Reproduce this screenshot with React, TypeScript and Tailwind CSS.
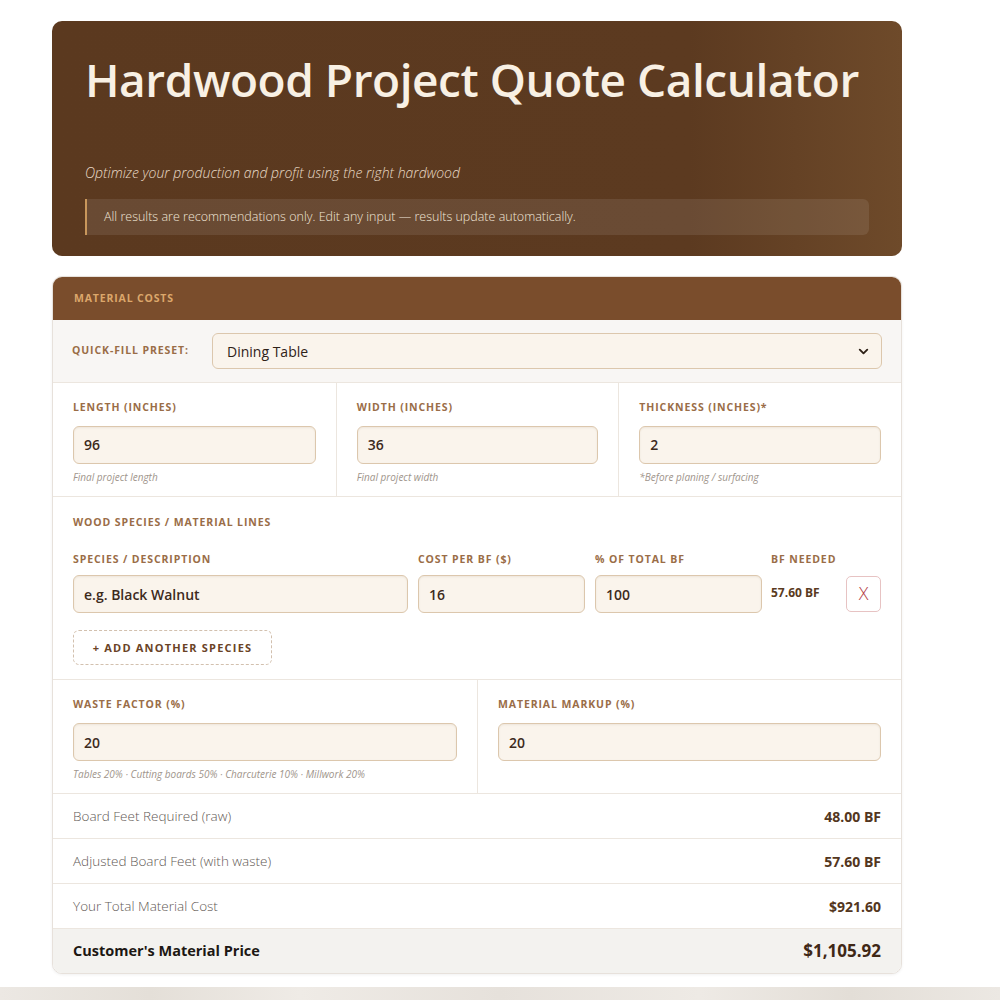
import { ChevronDown } from "lucide-react";

const label =
  "block whitespace-nowrap text-[10.5px] font-bold uppercase tracking-[0.085em] text-[#9a6d47]";
const input =
  "h-[38px] w-full rounded-[6px] border border-[#dcc7ad] bg-[#faf4ec] px-[10px] text-[14px] font-semibold text-[#3d2a1c] shadow-[inset_0_1px_2px_rgba(90,60,30,0.08)] flex items-center";
const hint = "mt-[6px] text-[10px] italic text-[#a0958c]";

function Field({ name, value, note }: { name: string; value: string; note?: string }) {
  return (
    <div className="flex flex-col px-[20px] pt-[17px] pb-[11px]">
      <span className={label}>{name}</span>
      <div className={`${input} mt-[10px]`}>{value}</div>
      {note ? <span className={hint}>{note}</span> : <span className="h-[21px]" />}
    </div>
  );
}

const results = [
  { name: "Board Feet Required (raw)", value: "48.00 BF" },
  { name: "Adjusted Board Feet (with waste)", value: "57.60 BF" },
  { name: "Your Total Material Cost", value: "$921.60" },
];

export default function App() {
  return (
    <div className="min-h-screen bg-white font-['Open_Sans',sans-serif]">
      <div className="ml-[52px] w-[850px] pt-[21px]">
        {/* Hero */}
        <div className="flex h-[235px] flex-col rounded-[10px] bg-[linear-gradient(90deg,#5b391f_0%,#5c3a20_75%,#6e4a2a_100%)] px-[33px] pt-[28px]">
          <h1 className="whitespace-nowrap text-[46px] font-semibold leading-[60px] tracking-[-0.01em] text-[#f8f0e4]">
            Hardwood Project Quote Calculator
          </h1>
          <p className="mt-[54px] text-[14px] font-light italic leading-[20px] text-[#e9dac6]">
            Optimize your production and profit using the right hardwood
          </p>
          <div className="mt-[16px] flex h-[36px] items-center rounded-r-[6px] border-l-2 border-[#c9975b] bg-[rgba(255,255,255,0.09)] px-[17px] text-[12.5px] font-light text-[#f1e6d8]">
            All results are recommendations only. Edit any input — results update automatically.
          </div>
        </div>

        {/* Material card */}
        <div className="mt-[20px] overflow-hidden rounded-[10px] border border-[#e7e1db] bg-white shadow-[0_1px_3px_rgba(0,0,0,0.06)]">
          <div className="flex h-[43px] items-center bg-[#7a4d2c] px-[21px] text-[10.5px] font-bold uppercase tracking-[0.08em] text-[#dca76b]">
            Material costs
          </div>

          <div className="flex h-[63px] items-center gap-[12px] border-b border-[#ece6df] bg-[#f8f6f4] px-[19px]">
            <span className={`${label} w-[128px] tracking-[0.11em]`}>Quick-fill preset:</span>
            <div className="flex h-[36px] flex-1 items-center justify-between rounded-[6px] border border-[#dcc7ad] bg-[#faf4ec] pl-[14px] pr-[10px] text-[14px] font-medium text-[#2f2218]">
              Dining Table
              <ChevronDown className="size-[15px] text-[#2f2218]" strokeWidth={3} />
            </div>
          </div>

          <div className="grid grid-cols-3 border-b border-[#ece6df]">
            <Field name="Length (inches)" value="96" note="Final project length" />
            <div className="border-l border-[#ece6df]">
              <Field name="Width (inches)" value="36" note="Final project width" />
            </div>
            <div className="border-l border-[#ece6df]">
              <Field name="Thickness (inches)*" value="2" note="*Before planing / surfacing" />
            </div>
          </div>

          <div className="border-b border-[#ece6df] px-[20px] pt-[18px] pb-[14px]">
            <span className={label}>Wood species / material lines</span>
            <div className="mt-[21px] grid grid-cols-[335px_167px_167px_64px_34px] items-center gap-x-[10px]">
              <span className={label}>Species / description</span>
              <span className={label}>Cost per BF ($)</span>
              <span className={label}>% of total BF</span>
              <span className={`${label} -ml-[1px] tracking-[0.05em]`}>BF needed</span>
              <span />
              <div className={`${input} mt-[8px] h-[37px]`}>e.g. Black Walnut</div>
              <div className={`${input} mt-[8px] h-[37px] font-medium`}>16</div>
              <div className={`${input} mt-[8px] h-[37px] font-medium`}>100</div>
              <span className="mt-[6px] -ml-[1px] whitespace-nowrap text-[12px] font-bold text-[#5a3a20]">57.60 BF</span>
              <button className="mt-[7px] flex h-[36px] w-[35px] items-center justify-center rounded-[5px] border border-[#e7c3c3] bg-white text-[18px] font-light text-[#b5424a]">
                X
              </button>
            </div>
            <button className="mt-[17px] flex h-[35px] w-[199px] items-center justify-center rounded-[6px] border border-dashed border-[#d2c0ae] text-[11px] font-bold uppercase tracking-[0.11em] text-[#6a4326]">
              + Add another species
            </button>
          </div>

          <div className="grid grid-cols-2 border-b border-[#ece6df]">
            <Field name="Waste factor (%)" value="20" note="Tables 20% · Cutting boards 50% · Charcuterie 10% · Millwork 20%" />
            <div className="border-l border-[#ece6df]">
              <Field name="Material markup (%)" value="20" />
            </div>
          </div>

          {results.map((r) => (
            <div
              key={r.name}
              className="flex h-[45px] items-center justify-between border-b border-[#ece6df] px-[20px]"
            >
              <span className="text-[13.5px] font-light text-[#5f5955]">{r.name}</span>
              <span className="text-[14px] font-bold text-[#533620]">{r.value}</span>
            </div>
          ))}
          <div className="flex h-[44px] items-center justify-between bg-[#f3f2ef] px-[20px]">
            <span className="text-[14.5px] font-bold text-[#1c1713]">Customer's Material Price</span>
            <span className="text-[17px] font-bold text-[#3f2816]">$1,105.92</span>
          </div>
        </div>
      </div>
      <div className="mt-[13px] h-[16px] bg-[linear-gradient(90deg,#ece8e3,#e4dfd8_15%,#efebe6_30%,#e6e1db_50%,#eeeae5_70%,#e3ded7_85%,#ece8e3)]" />
    </div>
  );
}
